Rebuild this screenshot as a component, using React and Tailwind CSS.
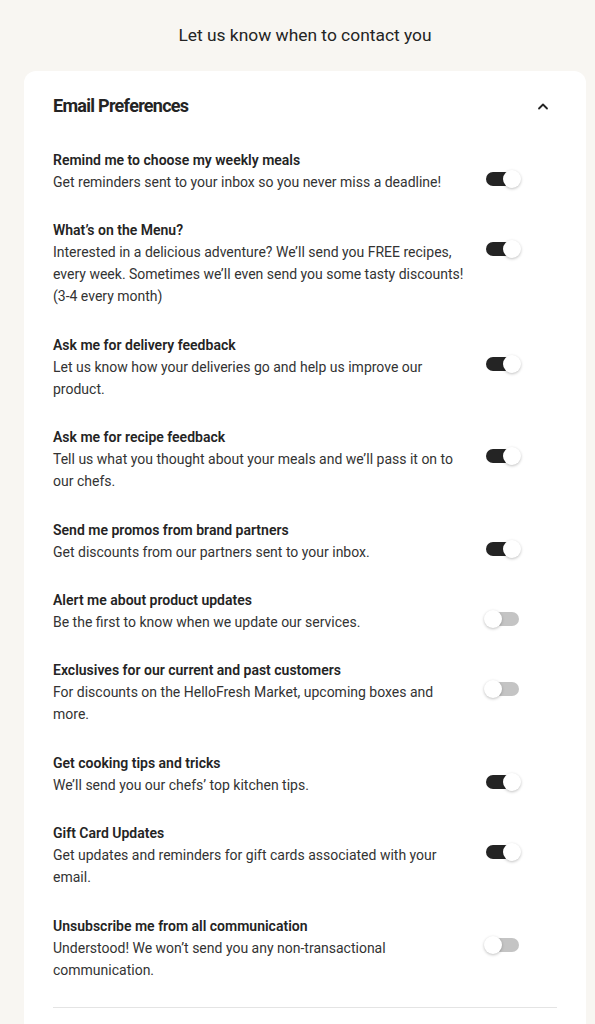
const prefs = [
  {
    title: "Remind me to choose my weekly meals",
    text: "Get reminders sent to your inbox so you never miss a deadline!",
    on: true,
  },
  {
    title: "What’s on the Menu?",
    text: "Interested in a delicious adventure? We’ll send you FREE recipes, every week. Sometimes we’ll even send you some tasty discounts! (3-4 every month)",
    on: true,
  },
  {
    title: "Ask me for delivery feedback",
    text: "Let us know how your deliveries go and help us improve our product.",
    on: true,
  },
  {
    title: "Ask me for recipe feedback",
    text: "Tell us what you thought about your meals and we’ll pass it on to our chefs.",
    on: true,
  },
  {
    title: "Send me promos from brand partners",
    text: "Get discounts from our partners sent to your inbox.",
    on: true,
  },
  {
    title: "Alert me about product updates",
    text: "Be the first to know when we update our services.",
    on: false,
  },
  {
    title: "Exclusives for our current and past customers",
    text: "For discounts on the HelloFresh Market, upcoming boxes and more.",
    on: false,
  },
  {
    title: "Get cooking tips and tricks",
    text: "We’ll send you our chefs’ top kitchen tips.",
    on: true,
  },
  {
    title: "Gift Card Updates",
    text: "Get updates and reminders for gift cards associated with your email.",
    on: true,
  },
  {
    title: "Unsubscribe me from all communication",
    text: "Understood! We won’t send you any non-transactional communication.",
    on: false,
  },
];

function Toggle({ on }) {
  return (
    <div className="relative h-[18px] w-[37px] shrink-0">
      <div
        className={
          on
            ? "absolute left-[2px] top-[2px] h-[14px] w-[30px] rounded-full bg-[#242424]"
            : "absolute left-[5px] top-[2px] h-[14px] w-[30px] rounded-full bg-[#c4c4c4]"
        }
      />
      <div
        className={
          on
            ? "absolute right-0 top-0 h-[18px] w-[18px] rounded-full bg-white shadow-[0_1px_3px_rgba(0,0,0,0.25)]"
            : "absolute left-0 top-0 h-[18px] w-[18px] rounded-full bg-white shadow-[0_1px_3px_rgba(0,0,0,0.25)]"
        }
      />
    </div>
  );
}

export default function App() {
  return (
    <div
      className="min-h-[1024px] bg-[#f8f6f2] pl-[24px] pr-[9px] pt-[24px]"
      style={{ fontFamily: "Roboto, 'Noto Sans', sans-serif" }}
    >
      <h1 className="text-center text-[17.4px] leading-[22px] text-[#242424]">
        Let us know when to contact you
      </h1>

      <div className="mt-[25px] rounded-[12px] bg-white px-[29px] pb-[40px] pt-[24px]">
        <div className="flex items-center justify-between">
          <h2 className="text-[18px] font-bold leading-[22px] tracking-[-0.04em] text-[#242424]">
            Email Preferences
          </h2>
          <svg
            width="12"
            height="8"
            viewBox="0 0 12 8"
            className="mr-[8px]"
            fill="none"
          >
            <path
              d="M2 6.5 6 2.5 10 6.5"
              stroke="#242424"
              strokeWidth="1.8"
              strokeLinecap="round"
              strokeLinejoin="round"
            />
          </svg>
        </div>

        <div className="mt-[32px] flex flex-col gap-[26.4px]">
          {prefs.map((p) => (
            <div key={p.title} className="flex items-start gap-[19px]">
              <div className="w-[412px] text-[14px] leading-[22px]">
                <div className="font-semibold text-[#242424]">{p.title}</div>
                <div className="text-[#333333]">{p.text}</div>
              </div>
              <div className="mt-[21px]">
                <Toggle on={p.on} />
              </div>
            </div>
          ))}
        </div>

        <div className="mt-[26px] h-px bg-[#e4e4e4]" />
      </div>
    </div>
  );
}
